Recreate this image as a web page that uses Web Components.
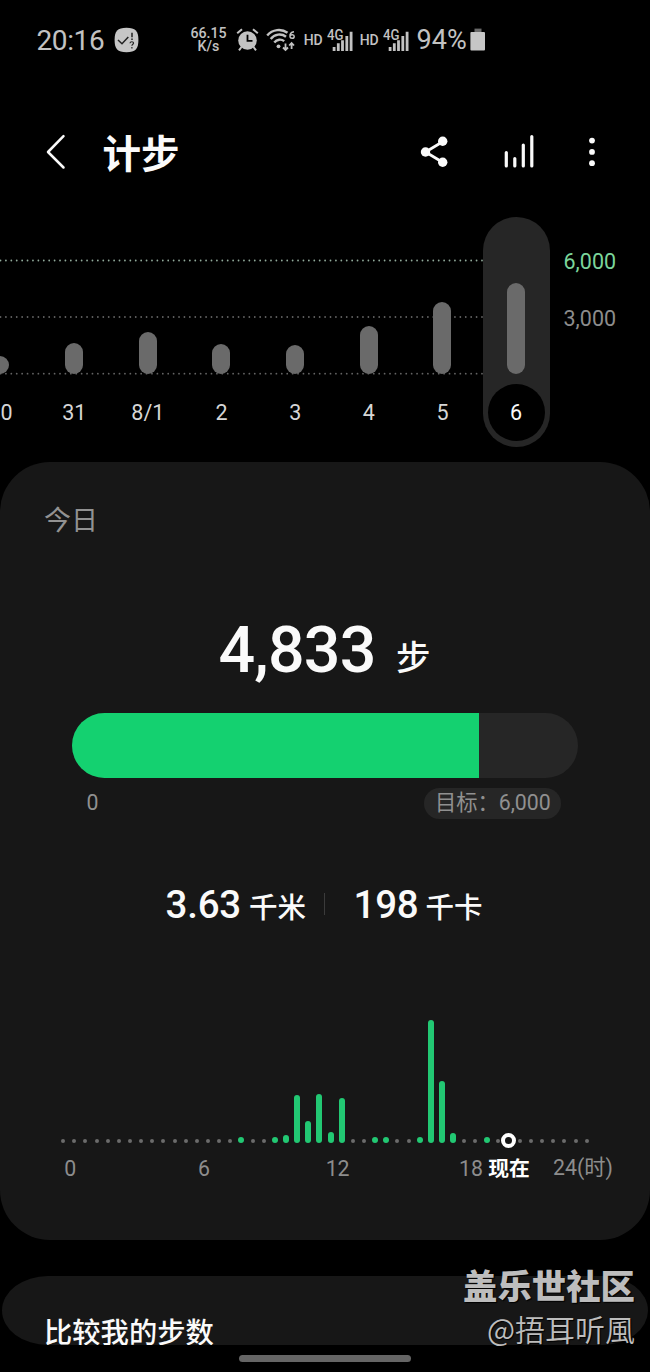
<!DOCTYPE html>
<html lang="zh-CN">
<head>
<meta charset="utf-8">
<title>计步</title>
<style>
html,body{margin:0;background:#000;}
body{width:650px;height:1372px;overflow:hidden;font-family:Roboto,"Noto Sans CJK SC",sans-serif;color:#fafafa;}
</style>
</head>
<body>
<steps-app></steps-app>
<script>
const define = (name, html, setup) => customElements.define(name, class extends HTMLElement {
  connectedCallback() {
    if (this.shadowRoot) return;
    const root = this.attachShadow({mode: 'open'});
    const t = document.createElement('template');
    t.innerHTML = html;
    root.append(t.content.cloneNode(true));
    if (setup) setup(this, root);
  }
});

define('signal-level', `
<style>:host{display:block;width:27px;height:26px;margin-right:5.500px}svg{display:block}text{font:500 14px Roboto,sans-serif}</style>
<svg width="27" height="26" fill="#c2c2c2"><text x="0" y="13" textLength="16.500" lengthAdjust="spacingAndGlyphs">4G</text>
<g stroke="#000" stroke-width="1.2" paint-order="stroke"><path d="M5.7 20h2.8v4H5.7zM9.900 16.3h2.8V24H9.9zM14.1 13.3h2.8V24h-2.8zM18.4 9h2.8v15h-2.8zM22.7 4.7h2.8V24h-2.8z"/></g></svg>`);

define('status-bar', `
<style>
:host{display:flex;align-items:center;height:80px;padding-left:36.500px;color:#c2c2c2;box-sizing:border-box}
svg{display:block;flex:none}
.time{font-size:28px;width:77.500px;line-height:81px;white-space:nowrap;letter-spacing:-.4px}
.rate{font-size:14.200px;font-weight:500;line-height:13.500px;text-align:center;width:38px;margin-left:50.500px;margin-right:8.500px}
.hd{font-size:14px;font-weight:500;width:23.500px;line-height:20px;margin-top:-1px;letter-spacing:-.2px}
.pct{font-size:27px;line-height:82px;width:53.500px;white-space:nowrap;margin-left:.8px}
</style>
<div class="time">20:16</div>
<svg width="25" height="26" viewBox="0 0 25 26"><path d="M12.5.8C21.5.8 24.4 4 24.4 13S21.5 25.2 12.5 25.2.6 22 .6 13 3.500.8 12.500.8Z" fill="#c6c6c6"/><path d="M4 13l4 3.800L14.300 10" fill="none" stroke="#222" stroke-width="1.500"/><path d="M18 5.800v4.500M18 11.500v1.600" stroke="#222" stroke-width="1.500"/><path d="M16 16.200c.2-2 3.700-1.900 3.500 0-.1 1.200-1.500 1-1.600 2.600M17.900 20v1.500" fill="none" stroke="#222" stroke-width="1.200"/></svg>
<div class="rate"><div>66.15</div><div>K/s</div></div>
<svg width="23" height="26" viewBox="0 0 23 26"><circle cx="11.500" cy="13.500" r="9.300" fill="#c2c2c2"/><path d="M1.200 6.300L6 2.200M21.800 6.300L17 2.200M5.500 20L3 23.300M17.500 20l2.500 3.300" stroke="#c2c2c2" stroke-width="2" fill="none"/><path d="M11.500 7.800v6h5" stroke="#000" stroke-width="1.800" fill="none"/></svg>
<svg width="30" height="26" viewBox="0 0 30 26" style="margin:0 7.800px 0 7px" fill="none" stroke="#c2c2c2" stroke-width="2.400"><path d="M1.200 8.500C6.500 2.200 15.500 1.300 21.500 5.800M4.700 12C8.500 7 15.500 6.200 20 9.800M8.300 15.500c2.600-3.300 7-3.700 9.900-1.300"/><circle cx="12.500" cy="19.300" r="1.900" fill="#c2c2c2" stroke="none"/><path d="M19.500 16.500v6M17 20.500l2.500 2.500 2.500-2.500M25.600 22v-6M23.200 18.500l2.400-2.500 2.400 2.500" stroke-width="1.800"/><path d="M28 4.700C25 5 23.800 7 24 9.500c.2 2.500 4.200 2.400 4.200 0 0-2.200-3.300-2.500-4.200-.5" stroke-width="1.500"/></svg>
<div class="hd">HD</div><signal-level></signal-level>
<div class="hd">HD</div><signal-level></signal-level>
<div class="pct">94%</div>
<svg width="16" height="24" viewBox="0 0 16 24"><path d="M4.500.6h7v3.500h-7z" fill="#6a6a6a"/><rect x=".4" y="4" width="14.600" height="18.500" rx="1" fill="#c6c6c6"/></svg>`);

define('app-header', `
<style>
:host{display:flex;align-items:center;height:144px;box-sizing:border-box;padding-left:44px}
h1{margin:0 241.500px 0 35.500px;width:76px;font-size:38.500px;line-height:60px;font-weight:700;white-space:nowrap;font-family:"Noto Sans CJK SC",sans-serif;padding-bottom:3px}
svg{display:block;flex:none}
</style>
<svg width="23" height="40" viewBox="0 0 23 40" fill="none" stroke="#fafafa" stroke-width="2.500" stroke-linecap="round" stroke-linejoin="round"><path d="M19.500 4.200L4 20l15.500 15.500"/></svg>
<h1><slot></slot></h1>
<svg width="30" height="34" viewBox="0 0 30 34" fill="#fafafa"><path d="M23 6.500L5.500 17 23 27.500" fill="none" stroke="#fafafa" stroke-width="2.800"/><circle cx="5.500" cy="17" r="4.700"/><circle cx="22.700" cy="6.300" r="4.700"/><circle cx="22.700" cy="27.300" r="4.700"/></svg>
<svg width="36" height="36" viewBox="0 0 36 36" style="margin-left:53px" stroke="#fafafa" stroke-width="3.200" stroke-linecap="round"><path d="M3.300 18.500v13.400M11.800 24.500v7.400M20.300 11v20.900M28.800 2.500v29.400"/></svg>
<svg width="8" height="32" viewBox="0 0 8 32" style="margin-left:48.500px" fill="#fafafa"><circle cx="4" cy="4.600" r="2.900"/><circle cx="4" cy="15.900" r="2.900"/><circle cx="4" cy="27.200" r="2.900"/></svg>`);

define('day-column', `
<style>
:host{display:grid;grid-template-rows:157px 77px;width:73.670px;flex:none;justify-items:center}
.bar{align-self:end;width:18px;border-radius:9px;background:#6a6a6a;height:var(--h)}
.day{font-size:21.500px;line-height:78px;color:#d6d6d6;padding-left:.5px}
:host([selected]){width:67px;margin-left:3.500px;height:230px;grid-template-rows:157px 73px;background:#262626;border-radius:34px}
:host([selected]) .day{width:57px;height:57px;border-radius:50%;background:#000;line-height:58px;text-align:center;color:#fafafa;margin-top:10px;padding:0}
</style><div class="bar"></div><div class="day"><slot></slot></div>`,
(el, root) => root.querySelector('.bar').style.setProperty('--h', el.getAttribute('value') + 'px'));

define('day-chart', `
<style>
:host{display:grid;height:238px;grid-template-columns:650px}
svg,.days,.scale{grid-area:1/1}
svg{display:block;margin-top:-7px}
.days{display:flex;margin-left:-36.500px;align-items:flex-start;margin-top:-7px}
.scale{justify-self:end;width:86.500px;font-size:21.500px;line-height:56.500px;margin-top:10px;color:#8c8c8c}
.scale b{display:block;font-weight:400;color:#7bd59b}
</style>
<svg width="484" height="170" fill="none" stroke-width="1.800" stroke-linecap="round" stroke-dasharray="0 5.410"><path d="M.5 43.500H483" stroke="#91aa9b"/><path d="M.5 100H483M.5 156.700H483" stroke="#646464"/></svg>
<div class="days"><day-column value="18">30</day-column><day-column value="31">31</day-column><day-column value="42">8/1</day-column><day-column value="30">2</day-column><day-column value="29">3</day-column><day-column value="48">4</day-column><day-column value="72">5</day-column><day-column selected value="91.500">6</day-column></div>
<div class="scale"><b>6,000</b>3,000</div>`);

define('goal-progress', `
<style>
:host{display:block;width:506px;margin:0 0 0 72px}
.track{height:65px;border-radius:32.500px;background:#262626;overflow:hidden}
.fill{height:100%;width:80.450%;background:#14d170}
.legend{display:flex;justify-content:space-between;align-items:center;height:31px;margin:9.500px 17px 0 14.500px;color:#909090;font-size:21.300px;line-height:30px}
.goal{background:#262626;border-radius:16px;padding:0 10px 1px 11px;width:116px;white-space:nowrap;letter-spacing:-.05px}
</style><div class="track"><div class="fill"></div></div><div class="legend"><span>0</span><span class="goal">目标：6,000</span></div>`);

define('hour-chart', `
<style>
:host{display:block}
.plot{display:flex;align-items:flex-end;height:126px;margin-left:57.600px}
.slot{width:11.150px;flex:none;display:flex;justify-content:center;align-items:flex-end}
.slot i{display:block;width:4px;height:4px;border-radius:3px;background:#6b6b6b;margin-bottom:.5px}
.slot i.on{width:6px;background:#22c873;margin-bottom:0}
.slot i.now{box-sizing:border-box;width:15px;height:15px;border-radius:50%;border:4px solid #fff;background:#171717;margin:0 -3px -5px;flex:none;z-index:1}
.axis{display:flex;font-size:21.300px;line-height:30px;margin:11px 0 0 3.400px;color:#8d8d8d;white-space:nowrap}
.axis span{width:133.700px;text-align:center;flex:none}
.axis .h18{width:26px;margin-left:53.500px}
.axis .cur{width:43px;margin-left:3.500px;color:#fff;font-weight:700;font-size:20.800px}
.axis .end{width:60px;margin-left:22.500px;line-height:27px}
</style><div class="plot"></div>
<div class="axis"><span>0</span><span>6</span><span>12</span><span class="h18">18</span><span class="cur">现在</span><span class="end">24(时)</span></div>`,
(el, root) => {
  const steps = {16:6,19:6,20:8,21:48,22:22,23:49,24:11,25:45,28:6,29:6,32:6,33:123,34:62,35:10,38:6};
  const plot = root.querySelector('.plot');
  for (let i = 0; i < 48; i++) {
    const slot = document.createElement('div'), mark = document.createElement('i');
    slot.className = 'slot';
    if (steps[i]) { mark.className = 'on'; mark.style.height = steps[i] + 'px'; }
    if (i === 40) mark.className = 'now';
    slot.append(mark); plot.append(slot);
  }
});

define('today-card', `
<style>
:host{display:block;box-sizing:border-box;height:778px;border-radius:50px;background:#171717;padding-top:39px}
.label{font-size:27px;line-height:40px;margin-left:44px;color:#929292;font-weight:400}
.count{display:flex;align-items:baseline;height:80px;line-height:80px;margin:68.500px 0 23.500px 218.500px;font-size:64.500px;font-weight:500;white-space:nowrap}
.count span{width:158px;letter-spacing:-.8px}
.count small{font-size:34.500px;font-weight:500;margin-left:19.500px;transform:translateY(-2px)}
.stats{display:flex;align-items:baseline;line-height:50px;height:50px;margin:61px 0 87.500px 165.500px;font-size:38.500px;font-weight:500;white-space:nowrap}
.stats small{font-size:28.500px;margin-left:8px;width:57px}
.stats .km{width:75.500px;letter-spacing:-.2px}.stats .kcal{width:64px;letter-spacing:-.2px}
.stats hr{width:1.500px;height:22px;border:0;background:#3b3b3b;margin:13px 28.500px 0 17.500px;align-self:flex-start}
</style>
<div class="label">今日</div>
<div class="count"><span>4,833</span><small>步</small></div>
<goal-progress></goal-progress>
<div class="stats"><span class="km">3.63</span><small>千米</small><hr><span class="kcal">198</span><small>千卡</small></div>
<hour-chart></hour-chart>`);

define('compare-card', `
<style>:host{display:block;box-sizing:border-box;width:646px;height:69px;margin:36px 2px 0;background:#171717;border-radius:46px/34.500px}
div{height:69px;overflow:hidden;box-sizing:border-box;padding:38px 0 0 42px;font-size:28.300px;line-height:40px;font-weight:500;white-space:nowrap}</style><div><slot></slot></div>`);

define('community-mark', `
<style>:host{display:block;position:absolute;right:15px;top:1264px;text-align:right;color:#bdbdbd;text-shadow:1px 1px 1px #000;font-family:"Noto Sans CJK SC",sans-serif;white-space:nowrap}
b{display:block;font-size:34.400px;line-height:40px;font-weight:900}
span{display:block;font-size:30px;line-height:44px;margin-top:2px;font-weight:350}</style><b>盖乐世社区</b><span>@捂耳听風</span>`);

define('steps-app', `
<style>:host{display:block;position:relative;width:650px;height:1372px;overflow:hidden;background:#000}
.home{width:172px;height:7px;border-radius:4px;background:#656565;margin:10px auto 0}</style>
<status-bar></status-bar><app-header>计步</app-header><day-chart></day-chart><today-card></today-card><compare-card>比较我的步数</compare-card><div class="home"></div><community-mark></community-mark>`);
</script>
</body>
</html>
